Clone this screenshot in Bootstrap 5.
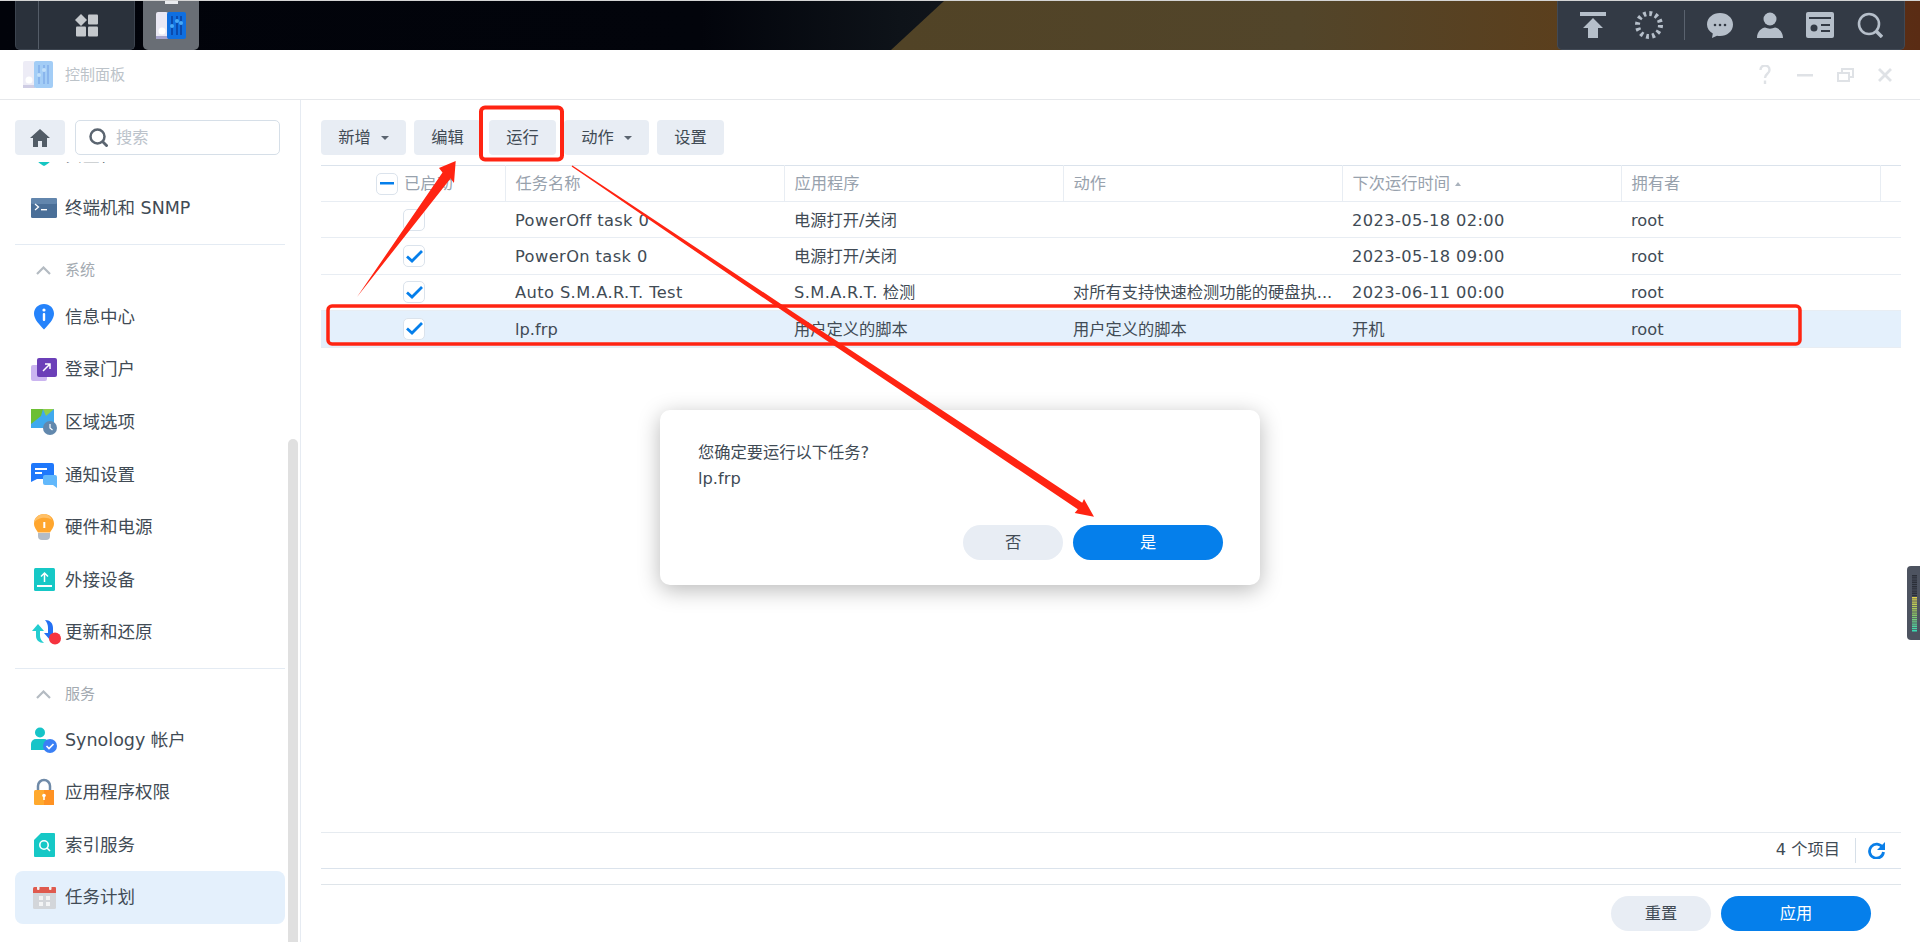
<!DOCTYPE html>
<html lang="zh-CN">
<head>
  <meta charset="UTF-8">
  <title>控制面板 | 任务计划</title>
  <meta name="viewport" content="width=device-width, initial-scale=1">
  <link href="https://cdn.jsdelivr.net/npm/bootstrap@5.3.0/dist/css/bootstrap.min.css" rel="stylesheet">
  <style>
    html, body { height: 100%; }
    body {
      font-family: "DejaVu Sans", "Noto Sans CJK SC", sans-serif;
      font-size: 16.25px;
      color: #414b55;
      overflow: hidden;
      position: relative;
    }

    /* desktop strip */
    .desk-bar {
      height: 50px;
      flex: none;
      position: relative;
      border-top: 1px solid #d4d4d4;
      background: linear-gradient(90deg, #01030a 0, #02040b 700px, #0e1319 900px, #11151b 950px);
    }
    .desk-bar::before {
      content: "";
      position: absolute;
      inset: 0;
      clip-path: polygon(944px 0, 100% 0, 100% 100%, 891px 100%);
      background: linear-gradient(90deg, #514326 900px, #52452a 1300px, #5b3f1d 1560px, #5a2c14 1920px);
    }
    .task-group {
      position: relative;
      height: 49px;
      padding-left: 15px;
      gap: 8px;
    }
    .task-main {
      width: 120px;
      background: #2a313b;
      border: 1px solid #3c444f;
      border-top: 0;
      border-radius: 0 0 5px 5px;
    }
    .task-pin { width: 23px; border-right: 1px solid #545c67; }
    .task-active {
      width: 56px;
      position: relative;
      background: #696e75;
      border-radius: 0 0 5px 5px;
    }
    .task-active::before {
      content: "";
      position: absolute;
      left: 22px;
      top: 0;
      width: 13px;
      height: 3px;
      background: #e9ebee;
    }
    .tray {
      position: relative;
      width: 348px;
      height: 49px;
      margin-right: 15px;
      padding-left: 10px;
      background: #333a45;
      border: 1px solid #414955;
      border-top: 0;
      border-radius: 0 0 5px 5px;
    }
    .tray-slot { width: 50px; }
    .tray-spin { margin-left: 6px; }
    .tray-line { width: 1px; height: 30px; background: #5a626e; margin: 0 10px; }

    /* window frame */
    .win { flex: 1 1 auto; min-height: 0; background: #fff; border-radius: 4px 4px 0 0; }
    .win-title { height: 50px; flex: none; border-bottom: 1px solid #e6e8eb; padding-left: 23px; }
    .win-name { font-size: 15px; color: #bcc3c9; margin: 1px 0 0 12px; }
    .win-ctrl { width: 40px; color: #dfe2e6; }
    .win-ctrls { padding-right: 15px; }

    /* left side */
    .side {
      width: 301px;
      flex: none;
      position: relative;
      border-right: 1px solid #e6ebf2;
    }
    .side-head { height: 62px; flex: none; padding: 20px 20px 0 15px; gap: 10px; }
    .home-btn {
      width: 50px;
      height: 35px;
      background: #e8edf4;
      border-radius: 4px;
    }
    .search-box {
      width: 205px;
      height: 35px;
      border: 1px solid #d6dfe8;
      border-radius: 5px;
      padding-left: 13px;
      font-size: 16.25px;
      color: #bcc3cb;
    }
    .search-box span { padding-top: 2px; }
    .side-list { overflow: hidden; min-height: 0; flex: 1 1 auto; padding: 0 15px; }
    .side-inner { margin-top: -33px; }
    .side-item {
      height: 52.6px;
      padding-left: 16px;
      gap: 8px;
      font-size: 17.5px;
      color: #414b55;
      border-radius: 8px;
    }
    .side-item svg { flex: none; overflow: visible; }
    .side-current { background: #e4f0fc; }
    .side-rule { border-top: 1px solid #e4ebf3; margin-top: 9.5px; }
    .side-group {
      height: 46px;
      padding: 6px 0 0 21px;
      gap: 14px;
      font-size: 15px;
      color: #a3aab1;
    }
    .side-group-low { height: 44px; }
    .side-bar {
      position: absolute;
      left: 288px;
      top: 339px;
      bottom: 0;
      width: 10px;
      background: #e0e0e0;
      border-radius: 5px 5px 0 0;
    }

    /* right side */
    .pane { flex: 1 1 auto; min-width: 0; padding: 20px 19px 11px 20px; }
    .tool-row { gap: 8px; height: 35px; flex: none; margin-bottom: 10px; }
    .tool-btn {
      height: 35px;
      padding: 1px 17.25px 0;
      font-size: 16.25px;
      line-height: 34px;
      color: #414b55;
      background: #e8edf4;
      border: 0;
      border-radius: 4px;
      white-space: nowrap;
    }
    .tool-caret {
      display: inline-block;
      margin-left: 10px;
      vertical-align: 3px;
      border: 4px solid transparent;
      border-top: 4px solid #5b6570;
      border-bottom: 0;
    }
    .task-table { table-layout: fixed; margin: 0; width: 1580px; border-top: 1px solid #dbe3ec; font-size: 16.25px; }
    .task-table th, .task-table td {
      padding: 2px 10px 0;
      vertical-align: middle;
      color: #414b55;
      background: transparent;
      box-shadow: none;
      border-bottom: 1px solid #e8edf3;
      white-space: nowrap;
    }
    .task-table th {
      height: 36px;
      font-weight: 400;
      color: #98a2ad;
      border-right: 1px solid #e8edf3;
      border-bottom-width: 1px;
    }
    .task-table th:last-child { border-right: 0; }
    .task-table td { height: 36.4px; }
    .task-table td.cell-tight { padding-right: 0; }
    .task-table tr.row-picked td { background: #e4f0fc; }
    .head-pick { padding-left: 45px; gap: 6px; }
    .head-pick .tick { margin-top: -2px; }
    .tx-wide { letter-spacing: .4px; }
    .sort-up {
      display: inline-block;
      margin-left: 5px;
      vertical-align: 3px;
      border: 3px solid transparent;
      border-bottom: 4px solid #a9b2bc;
      border-top: 0;
    }
    .tick {
      width: 22px;
      height: 22px;
      background: #fff;
      border: 1px solid #dbe3ec;
      border-radius: 5px;
    }
    .tick-row { margin: -2px 0 0 72px; }
    .pager {
      height: 37px;
      flex: none;
      margin-top: auto;
      border-top: 1px solid #e6ebf0;
      border-bottom: 1px solid #dbe3ec;
      padding-right: 16px;
    }
    .pager-line { width: 1px; height: 25px; background: #d6dfe8; margin: 0 12px 0 15px; }
    .act-row {
      margin-top: 15px;
      padding-top: 11px;
      padding-right: 30px;
      border-top: 1px solid #dfe5ea;
      gap: 10px;
      flex: none;
    }
    .pill-btn {
      height: 35px;
      padding: 0;
      font-size: 16.25px;
      line-height: 35px;
      border: 0;
      border-radius: 18px;
      color: #414b55;
      background: #e8edf4;
    }
    .pill-blue { color: #fff; background: #057feb; }
    .pill-s { width: 100px; }
    .pill-l { width: 150px; }

    /* overlays */
    .ask-box {
      position: absolute;
      left: 660px;
      top: 410px;
      width: 600px;
      height: 175px;
      padding: 30px 37px 25px 38px;
      background: #fff;
      border-radius: 10px;
      box-shadow: 0 5px 22px rgba(0, 0, 0, .28);
      line-height: 26px;
      font-size: 16.25px;
    }
    .ask-btns { gap: 10px; margin-top: auto; }
    .meter { position: absolute; left: 1907px; top: 566px; }
    .marks { position: absolute; left: 0; top: 0; pointer-events: none; }
  </style>
</head>
<body class="d-flex flex-column">

<!-- Desktop strip -->
<div class="desk-bar d-flex justify-content-between">
  <div class="task-group d-flex">
    <div class="task-main d-flex">
      <div class="task-pin"></div>
      <div class="flex-grow-1 d-flex align-items-center justify-content-center">
        <svg width="24" height="24" viewBox="0 0 24 24" fill="#c5c9cd"><path d="M6 1l6 6-6 6-6-6z"/><rect x="13" y="1.500" width="10" height="10" rx="1"/><rect x="1" y="13.500" width="10" height="10" rx="1"/><rect x="13" y="13.500" width="10" height="10" rx="1"/></svg>
      </div>
    </div>
    <div class="task-active d-flex align-items-center justify-content-center">
      <svg width="30" height="28" viewBox="0 0 30 28"><rect width="12" height="27" rx="2" fill="#e9e8f4"/><rect y="24" width="12" height="3" fill="#a6a4cc"/><circle cx="6" cy="19" r="3.500" fill="#fff"/><rect x="11" width="19" height="27" rx="2" fill="#0f6fe0"/><path d="M16 4v19M21 4v19M25 4v19" stroke="#0a3f9c" stroke-width="1.500"/><circle cx="16" cy="14" r="2" fill="#46a8f5"/><circle cx="21" cy="9" r="2" fill="#46a8f5"/><circle cx="25" cy="11" r="2" fill="#46a8f5"/></svg>
    </div>
  </div>
  <div class="tray d-flex align-items-center">
    <div class="tray-slot d-flex justify-content-center">
      <svg width="26" height="26" viewBox="0 0 26 26" fill="#b6bfca"><rect width="26" height="4"/><path d="M13 6l10 10h-5v10H8V16H3z"/></svg>
    </div>
    <div class="tray-slot tray-spin d-flex justify-content-center">
      <svg width="30" height="30" viewBox="0 0 30 30"><circle cx="15" cy="15" r="11.500" fill="none" stroke="#b6bfca" stroke-width="5" stroke-dasharray="2.800 3.220"/></svg>
    </div>
    <div class="tray-line"></div>
    <div class="tray-slot d-flex justify-content-center">
      <svg width="26" height="26" viewBox="0 0 26 26"><path d="M13 1c7 0 13 4.700 13 11.500S20 24 13 24c-1 0-2 0-3-.3L5 26l.8-4.500C2.300 19.500 0 16.300 0 12.500 0 5.700 6 1 13 1z" fill="#b6bfca"/><circle cx="8" cy="13" r="1.300" fill="#333a45"/><circle cx="13" cy="13" r="1.300" fill="#333a45"/><circle cx="18" cy="13" r="1.300" fill="#333a45"/></svg>
    </div>
    <div class="tray-slot d-flex justify-content-center">
      <svg width="26" height="26" viewBox="0 0 26 26" fill="#b6bfca"><circle cx="13" cy="7" r="6.500"/><path d="M0 26c0-7 5-10 8-10.500 3 1.500 7 1.500 10 0 3 .5 8 3.500 8 10.500z"/></svg>
    </div>
    <div class="tray-slot d-flex justify-content-center">
      <svg width="28" height="26" viewBox="0 0 28 26"><rect width="28" height="26" rx="2" fill="#b6bfca"/><rect x="3" y="5" width="22" height="2" fill="#333a45"/><circle cx="8" cy="16" r="3.500" fill="#333a45"/><rect x="15" y="12" width="9" height="2" fill="#333a45"/><rect x="15" y="18" width="9" height="2" fill="#333a45"/></svg>
    </div>
    <div class="tray-slot d-flex justify-content-center">
      <svg width="26" height="26" viewBox="0 0 26 26" fill="none" stroke="#b6bfca"><circle cx="12" cy="12" r="10" stroke-width="2.600"/><path d="M19 19l6 6" stroke-width="3.500"/></svg>
    </div>
  </div>
</div>

<!-- Control panel window -->
<div class="win d-flex flex-column">
  <div class="win-title d-flex align-items-center">
    <svg width="30" height="28" viewBox="0 0 30 28"><rect width="12" height="27" rx="2" fill="#edecf6"/><rect y="24" width="12" height="3" fill="#cfcde4"/><circle cx="6" cy="19" r="3.500" fill="#fff"/><rect x="11" width="19" height="27" rx="2" fill="#a3cdf6"/><path d="M16 4v19M21 4v19M25 4v19" stroke="#82aeea" stroke-width="1.500"/><circle cx="16" cy="14" r="2" fill="#c2e0fa"/><circle cx="21" cy="9" r="2" fill="#c2e0fa"/></svg>
    <span class="win-name">控制面板</span>
    <div class="win-ctrls ms-auto d-flex">
      <div class="win-ctrl d-flex justify-content-center align-items-center">
        <svg width="12" height="20" viewBox="0 0 12 20" fill="none" stroke="#dfe2e6" stroke-width="2.400"><path d="M1.500 5c0-6 9-6 9 0 0 4-4.500 3.500-4.500 8"/><path d="M6 15.500V19"/></svg>
      </div>
      <div class="win-ctrl d-flex justify-content-center align-items-center">
        <svg width="16" height="4" viewBox="0 0 16 4"><rect y="1" width="16" height="2.500" fill="#dfe2e6"/></svg>
      </div>
      <div class="win-ctrl d-flex justify-content-center align-items-center">
        <svg width="17" height="14" viewBox="0 0 17 14" fill="none" stroke="#dfe2e6" stroke-width="2"><rect x="1" y="5" width="11" height="8"/><path d="M5 5V1h11v8h-4"/></svg>
      </div>
      <div class="win-ctrl d-flex justify-content-center align-items-center">
        <svg width="14" height="14" viewBox="0 0 14 14" stroke="#dfe2e6" stroke-width="2.800"><path d="M1 1l12 12M13 1L1 13"/></svg>
      </div>
    </div>
  </div>

  <div class="d-flex flex-grow-1 overflow-hidden">
    <!-- Left menu -->
    <div class="side d-flex flex-column">
      <div class="side-head d-flex">
        <div class="home-btn d-flex align-items-center justify-content-center">
          <svg width="20" height="18" viewBox="0 0 20 18" fill="#525c66"><path d="M10 0L0 9h3v9h5v-6h4v6h5V9h3z"/></svg>
        </div>
        <div class="search-box d-flex align-items-center gap-2">
          <svg width="19" height="19" viewBox="0 0 19 19" fill="none" stroke="#5b6570"><circle cx="8.500" cy="8.500" r="7" stroke-width="2.500"/><path d="M13.500 13.500l5 5" stroke-width="2.800"/></svg>
          <span>搜索</span>
        </div>
      </div>
      <div class="side-list">
        <div class="side-inner">
          <div class="side-item d-flex align-items-center">
            <svg width="26" height="26" viewBox="0 0 26 26"><path d="M4 2h18v12c0 4-5 8-9 10-4-2-9-6-9-10z" fill="#15c6c2"/></svg>
            <span>安全性</span>
          </div>
          <div class="side-item d-flex align-items-center">
            <svg width="26" height="26" viewBox="0 0 26 26"><rect y="3" width="26" height="20" rx="1.500" fill="#4a6f98"/><rect y="3" width="26" height="6" rx="1.500" fill="#6286ad"/><path d="M4 9l3.500 3L4 15" fill="none" stroke="#fff" stroke-width="1.300"/><rect x="10" y="14" width="6" height="1.400" fill="#fff"/></svg>
            <span>终端机和 SNMP</span>
          </div>
          <div class="side-rule"></div>
          <div class="side-group d-flex align-items-center">
            <svg width="15" height="9" viewBox="0 0 15 9" fill="none" stroke="#b4bbc2" stroke-width="2.200"><path d="M1 8l6.500-6.500L14 8"/></svg>
            <span>系统</span>
          </div>
          <div class="side-item d-flex align-items-center">
            <svg width="26" height="26" viewBox="0 0 26 26"><path d="M13 0c5.800 0 10 4.400 10 9.800 0 5.500-5.500 11-10 15.700C8.500 20.800 3 15.300 3 9.800 3 4.400 7.200 0 13 0z" fill="#2583fb"/><circle cx="13" cy="6" r="1.600" fill="#fff"/><rect x="11.800" y="9" width="2.400" height="8" rx="1" fill="#fff"/></svg>
            <span>信息中心</span>
          </div>
          <div class="side-item d-flex align-items-center">
            <svg width="26" height="26" viewBox="0 0 26 26"><rect y="8" width="16" height="16" rx="2" fill="#cbb5f0"/><rect x="6" y="1" width="20" height="19" rx="2" fill="#6b3fb8"/><path d="M12 14l7-7M14 7h5v5" fill="none" stroke="#fff" stroke-width="1.500"/></svg>
            <span>登录门户</span>
          </div>
          <div class="side-item d-flex align-items-center">
            <svg width="26" height="26" viewBox="0 0 26 26"><path d="M0 0h23v19H0z" fill="#3fa9ee"/><path d="M0 0h12l-2 7L0 15z" fill="#6cbf33"/><path d="M12 0h11l-8 7z" fill="#8fce4a"/><circle cx="19" cy="19" r="7" fill="#6288ad"/><path d="M19 15v4l2.500 2" fill="none" stroke="#fff" stroke-width="1.200"/></svg>
            <span>区域选项</span>
          </div>
          <div class="side-item d-flex align-items-center">
            <svg width="26" height="26" viewBox="0 0 26 26"><path d="M2 1h19a2 2 0 012 2v14H6l-6 3V3a2 2 0 012-2z" fill="#1f78fb"/><rect x="4" y="6" width="12" height="2" fill="#fff"/><rect x="4" y="10" width="7" height="2" fill="#fff"/><path d="M14 13h10a2 2 0 012 2v11l-4-3H14a2 2 0 01-2-2v-6a2 2 0 012-2z" fill="#62b8fb"/></svg>
            <span>通知设置</span>
          </div>
          <div class="side-item d-flex align-items-center">
            <svg width="26" height="26" viewBox="0 0 26 26"><path d="M13 0c5.500 0 10 4 10 9.500 0 4-2.500 6-4 9H7c-1.500-3-4-5-4-9C3 4 7.500 0 13 0z" fill="#ffa62e"/><path d="M13 0c-5.500 0-10 4-10 9 3-5 12-7 18-3-1.500-3.500-4.500-6-8-6z" fill="#ffc067"/><path d="M7 19h12v3a4 4 0 01-4 4h-4a4 4 0 01-4-4z" fill="#b4bcc6"/><rect x="12.300" y="8" width="2" height="6" fill="#fff"/></svg>
            <span>硬件和电源</span>
          </div>
          <div class="side-item d-flex align-items-center">
            <svg width="26" height="26" viewBox="0 0 26 26"><rect x="3" y="1" width="21" height="23" rx="1.500" fill="#16c8c6"/><path d="M13.500 15V6M10 9.500L13.500 6 17 9.500" fill="none" stroke="#fff" stroke-width="1.500"/><rect x="6" y="18" width="15" height="2" fill="#fff"/></svg>
            <span>外接设备</span>
          </div>
          <div class="side-item d-flex align-items-center">
            <svg width="26" height="26" viewBox="0 0 26 26"><path d="M7 4l6 7H9v5c0 3 2 5 4 7-5 0-8-3-8-7v-5H1z" fill="#23cdd0"/><path d="M14 0c5 0 8 3 8 8v5h3l-6 7-6-7h4V8c0-3-1-6-3-8z" fill="#2470f3"/><circle cx="24" cy="18.500" r="6" fill="#f5333f"/></svg>
            <span>更新和还原</span>
          </div>
          <div class="side-rule"></div>
          <div class="side-group side-group-low d-flex align-items-center">
            <svg width="15" height="9" viewBox="0 0 15 9" fill="none" stroke="#b4bbc2" stroke-width="2.200"><path d="M1 8l6.500-6.500L14 8"/></svg>
            <span>服务</span>
          </div>
          <div class="side-item d-flex align-items-center">
            <svg width="26" height="26" viewBox="0 0 26 26"><circle cx="9" cy="5.500" r="5" fill="#16c4c8"/><path d="M0 23v-6a5 5 0 015-5h8a5 5 0 015 5v6z" fill="#16c4c8"/><circle cx="19" cy="19" r="7" fill="#3a80f5"/><path d="M15.500 19l2.500 2.500 4.500-4.500" fill="none" stroke="#fff" stroke-width="1.700"/></svg>
            <span>Synology 帐户</span>
          </div>
          <div class="side-item d-flex align-items-center">
            <svg width="26" height="26" viewBox="0 0 26 26"><path d="M7 12V7a6 6 0 0112 0v5" fill="none" stroke="#6f8aa8" stroke-width="2.500"/><rect x="3" y="11" width="20" height="15" rx="1.500" fill="#ffa92e"/><rect x="13" y="11" width="10" height="15" fill="#ff9223"/><circle cx="13" cy="16.500" r="1.800" fill="#fff"/><rect x="12.200" y="17" width="1.600" height="4" fill="#fff"/></svg>
            <span>应用程序权限</span>
          </div>
          <div class="side-item d-flex align-items-center">
            <svg width="26" height="26" viewBox="0 0 26 26"><path d="M10 1h13a1 1 0 011 1v22a1 1 0 01-1 1H4a1 1 0 01-1-1V8z" fill="#16c8c6"/><circle cx="13" cy="13" r="4.200" fill="none" stroke="#fff" stroke-width="1.600"/><path d="M16 16l3 3" stroke="#fff" stroke-width="1.600"/></svg>
            <span>索引服务</span>
          </div>
          <div class="side-item side-current d-flex align-items-center">
            <svg width="26" height="26" viewBox="0 0 26 26"><rect x="2" y="3" width="23" height="22" rx="1.500" fill="#d3d6da"/><path d="M2 4.500A1.500 1.500 0 013.500 3H24a1 1 0 011 1v5H2z" fill="#df5a4e"/><rect x="6" y="1" width="2.500" height="5" rx="1" fill="#f1f1f1"/><rect x="18" y="1" width="2.500" height="5" rx="1" fill="#f1f1f1"/><rect x="8" y="12" width="4" height="4" fill="#f3f4f5"/><rect x="15" y="12" width="4" height="4" fill="#f3f4f5"/><rect x="8" y="18" width="4" height="4" fill="#f3f4f5"/><rect x="15" y="18" width="4" height="4" fill="#f3f4f5"/></svg>
            <span>任务计划</span>
          </div>
        </div>
      </div>
      <div class="side-bar"></div>
    </div>

    <!-- Task list -->
    <div class="pane d-flex flex-column">
      <div class="tool-row d-flex">
        <button class="btn tool-btn" type="button">新增<i class="tool-caret"></i></button>
        <button class="btn tool-btn" type="button">编辑</button>
        <button class="btn tool-btn" type="button">运行</button>
        <button class="btn tool-btn" type="button">动作<i class="tool-caret"></i></button>
        <button class="btn tool-btn" type="button">设置</button>
      </div>

      <table class="table task-table">
        <colgroup>
          <col style="width:184px"><col style="width:279px"><col style="width:279px"><col style="width:279px"><col style="width:279px"><col style="width:259px"><col style="width:21px">
        </colgroup>
        <thead>
          <tr>
            <th>
              <div class="head-pick d-flex align-items-center">
                <div class="tick d-flex align-items-center justify-content-center flex-shrink-0">
                  <svg width="14" height="3" viewBox="0 0 14 3"><rect width="14" height="2.500" fill="#057feb"/></svg>
                </div>
                <span class="text-nowrap">已启动</span>
              </div>
            </th>
            <th>任务名称</th>
            <th>应用程序</th>
            <th>动作</th>
            <th>下次运行时间<i class="sort-up"></i></th>
            <th>拥有者</th>
            <th></th>
          </tr>
        </thead>
        <tbody>
          <tr>
            <td><div class="tick tick-row"></div></td>
            <td class="tx-wide">PowerOff task 0</td>
            <td>电源打开/关闭</td>
            <td></td>
            <td class="tx-wide">2023-05-18 02:00</td>
            <td>root</td>
            <td></td>
          </tr>
          <tr>
            <td>
              <div class="tick tick-row d-flex align-items-center justify-content-center">
                <svg width="17" height="13" viewBox="0 0 17 13" fill="none" stroke="#057feb" stroke-width="2.800"><path d="M1 6.500l5 4.500L16 1"/></svg>
              </div>
            </td>
            <td class="tx-wide">PowerOn task 0</td>
            <td>电源打开/关闭</td>
            <td></td>
            <td class="tx-wide">2023-05-18 09:00</td>
            <td>root</td>
            <td></td>
          </tr>
          <tr>
            <td>
              <div class="tick tick-row d-flex align-items-center justify-content-center">
                <svg width="17" height="13" viewBox="0 0 17 13" fill="none" stroke="#057feb" stroke-width="2.800"><path d="M1 6.500l5 4.500L16 1"/></svg>
              </div>
            </td>
            <td class="tx-wide">Auto S.M.A.R.T. Test</td>
            <td><span class="tx-wide">S.M.A.R.T.</span> 检测</td>
            <td class="cell-tight">对所有支持快速检测功能的硬盘执...</td>
            <td class="tx-wide">2023-06-11 00:00</td>
            <td>root</td>
            <td></td>
          </tr>
          <tr class="row-picked">
            <td>
              <div class="tick tick-row d-flex align-items-center justify-content-center">
                <svg width="17" height="13" viewBox="0 0 17 13" fill="none" stroke="#057feb" stroke-width="2.800"><path d="M1 6.500l5 4.500L16 1"/></svg>
              </div>
            </td>
            <td>lp.frp</td>
            <td>用户定义的脚本</td>
            <td>用户定义的脚本</td>
            <td>开机</td>
            <td>root</td>
            <td></td>
          </tr>
        </tbody>
      </table>

      <div class="pager d-flex align-items-center justify-content-end">
        <span>4 个项目</span>
        <div class="pager-line"></div>
        <svg width="17" height="17" viewBox="0 0 17 17" fill="none"><path d="M14.500 5.500A7 7 0 1015.500 10" stroke="#0a7fe8" stroke-width="2.800"/><path d="M17 0v8h-8z" fill="#0a7fe8"/></svg>
      </div>
      <div class="act-row d-flex justify-content-end">
        <button class="btn pill-btn pill-s" type="button">重置</button>
        <button class="btn pill-btn pill-blue pill-l" type="button">应用</button>
      </div>
    </div>
  </div>
</div>

<!-- Confirm dialog -->
<div class="ask-box d-flex flex-column">
  <div>您确定要运行以下任务?</div>
  <div>lp.frp</div>
  <div class="ask-btns d-flex justify-content-end">
    <button class="btn pill-btn pill-s" type="button">否</button>
    <button class="btn pill-btn pill-blue pill-l" type="button">是</button>
  </div>
</div>

<!-- Resource meter at the screen edge -->
<svg class="meter" width="13" height="74" viewBox="0 0 13 74">
  <defs>
    <linearGradient id="meterFill" gradientUnits="userSpaceOnUse" x1="0" y1="31" x2="0" y2="66">
      <stop offset="0" stop-color="#e6d548"/>
      <stop offset=".5" stop-color="#8cc765"/>
      <stop offset="1" stop-color="#35dcb8"/>
    </linearGradient>
  </defs>
  <path d="M4 0h9v74H4a4 4 0 01-4-4V4a4 4 0 014-4z" fill="#4d5360"/>
  <path d="M7.500 9v22" stroke="#2b2f38" stroke-width="5" stroke-dasharray="1.400 .8"/>
  <path d="M7.500 31v35" stroke="url(#meterFill)" stroke-width="5" stroke-dasharray="1.400 .8"/>
</svg>

<!-- Red hand-drawn marks on the screenshot -->
<svg class="marks" width="1920" height="942" viewBox="0 0 1920 942">
  <rect x="481" y="107.500" width="81" height="52" rx="4" fill="none" stroke="#ff2412" stroke-width="4"/>
  <rect x="328" y="306" width="1472" height="38" rx="4" fill="none" stroke="#ff2412" stroke-width="3.500"/>
  <polygon points="357,297 442.500,172.600 439,168 455.700,161 454,183 450.500,178.400" fill="#ff2412"/>
  <polygon points="571.600,166.600 791.600,317.100 1077.800,509.300 1074.700,513 1094,516.700 1084,499 1082.200,502.700 794.400,312.900 572.400,165.400" fill="#ff2412"/>
</svg>

<script src="https://cdn.jsdelivr.net/npm/bootstrap@5.3.0/dist/js/bootstrap.bundle.min.js"></script>
</body>
</html>
